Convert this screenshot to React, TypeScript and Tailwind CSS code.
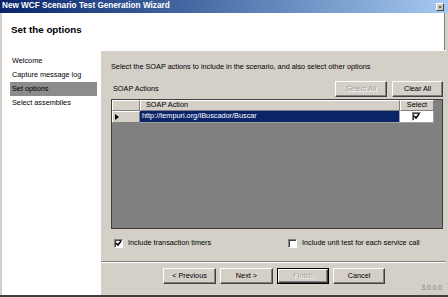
import React from 'react';

const btn =
  'h-full flex items-center justify-center bg-[#d4d0c8] border border-t-white border-l-white border-r-[#404040] border-b-[#404040] shadow-[inset_-1px_-1px_0_#808080]';

const Check = ({ checked }: { checked: boolean }) => (
  <div className="w-[9px] h-[9px] bg-white border border-t-[#808080] border-l-[#808080] border-r-white border-b-white shadow-[inset_1px_1px_0_#404040] flex items-center justify-center">
    {checked && (
      <svg width="7" height="7" viewBox="0 0 7 7">
        <path d="M1 3 L3 5 L6 1" stroke="#000" strokeWidth="1.5" fill="none" />
      </svg>
    )}
  </div>
);

export default function App() {
  const nav = ['Welcome', 'Capture message log', 'Set options', 'Select assemblies'];

  return (
    <div className="w-[448px] h-[297px] bg-[#d4d0c8] flex flex-col overflow-hidden text-[7.3px] text-black font-['Liberation_Sans',Arial,sans-serif]">
      {/* title bar */}
      <div className="h-[13px] shrink-0 flex items-center justify-between pl-[2px] pr-[4px] bg-gradient-to-r from-[#0a246a] to-[#a6caf0]">
        <span className="text-white font-bold text-[8.2px] leading-none">New WCF Scenario Test Generation Wizard</span>
        <div className="w-[8px] h-[8px] bg-[#d4d0c8] border border-t-white border-l-white border-r-[#404040] border-b-[#404040] flex items-center justify-center text-[6px] leading-none">
          ×
        </div>
      </div>

      <div className="flex-1 flex flex-col px-[2px] border-b-2 border-[#404040]">
        {/* header */}
        <div className="h-[37px] shrink-0 bg-white flex items-center pl-[9px] pb-[2px] mr-[1px] border-r border-[#808080]">
          <span className="font-bold text-[9.8px]">Set the options</span>
        </div>

        <div className="flex-1 flex">
          {/* left nav */}
          <div className="w-[99px] bg-white pt-[4px] pl-[8px] pr-[4px]">
            {nav.map((n) => (
              <div key={n} className={`h-[14px] flex items-center pl-[2px] ${n === 'Set options' ? 'bg-[#8c8c8c]' : ''}`}>
                {n}
              </div>
            ))}
          </div>

          {/* main panel */}
          <div className="flex-1 flex flex-col border-t border-white">
            <div className="pl-[10px] pr-[3px] flex flex-col">
              <div className="mt-[12px] h-[9px] flex items-center">
                Select the SOAP actions to include in the scenario, and also select other options
              </div>
              <div className="mt-[9px] h-[16px] flex items-center">
                <span className="ml-[2px] flex-1 pt-[1px]">SOAP Actions</span>
                <div className={`${btn} w-[52px] text-[#a0a0a0] [text-shadow:1px_1px_0_#fff]`}>Select All</div>
                <div className={`${btn} w-[51px] ml-[5px]`}>Clear All</div>
              </div>

              {/* grid */}
              <div className="mt-[2px] h-[130px] bg-[#808080] border border-t-[#404040] border-l-[#404040] border-r-[#404040] border-b-[#404040]">
                <div className="flex h-[11px]">
                  <div className="w-[28px] bg-[#d4d0c8] border-r border-b border-[#808080] border-t border-l border-t-white border-l-white" />
                  <div className="w-[260px] bg-[#d4d0c8] border-r border-b border-[#808080] border-t border-l border-t-white border-l-white flex items-center pl-[5px]">
                    SOAP Action
                  </div>
                  <div className="w-[34px] bg-[#d4d0c8] border-r border-b border-[#808080] border-t border-l border-t-white border-l-white flex items-center justify-center">
                    Select
                  </div>
                </div>
                <div className="flex h-[12px]">
                  <div className="w-[28px] bg-[#d4d0c8] border-r border-b border-[#808080] border-t border-l border-t-white border-l-white flex items-center pl-[2px]">
                    <svg width="4" height="6" viewBox="0 0 4 6">
                      <path d="M0 0 L4 3 L0 6 Z" fill="#000" />
                    </svg>
                  </div>
                  <div className="w-[260px] bg-[#0a246a] text-white border-r border-b border-[#a0a0a0] flex items-center pl-[2px]">
                    http://tempuri.org/IBuscador/Buscar
                  </div>
                  <div className="w-[34px] bg-white border-r border-b border-[#a0a0a0] flex items-center justify-center">
                    <Check checked />
                  </div>
                </div>
              </div>

              {/* options */}
              <div className="mt-[9px] h-[10px] flex items-center">
                <div className="ml-[3px] flex items-center gap-[5px] w-[174px]">
                  <Check checked />
                  <span>Include transaction timers</span>
                </div>
                <div className="flex items-center gap-[5px]">
                  <Check checked={false} />
                  <span>Include unit test for each service call</span>
                </div>
              </div>
            </div>

            {/* footer */}
            <div className="mt-[13px] flex-1 border-t border-t-[#808080] shadow-[inset_0_1px_0_#fff] flex flex-col">
              <div className="mt-[6px] h-[16px] flex justify-center gap-[4px] pl-[1px]">
                <div className={`${btn} w-[53px]`}>&lt; Previous</div>
                <div className={`${btn} w-[53px]`}>Next &gt;</div>
                <div className="h-full w-[52px] border border-black">
                  <div className={`${btn} w-full text-[#a0a0a0] [text-shadow:1px_1px_0_#fff]`}>Finish</div>
                </div>
                <div className={`${btn} w-[52px]`}>Cancel</div>
              </div>
              <div className="mt-[1px] pr-[4px] text-right text-[#808080] text-[6.8px] leading-none">3.0.0.0</div>
            </div>
          </div>
        </div>
      </div>
    </div>
  );
}
